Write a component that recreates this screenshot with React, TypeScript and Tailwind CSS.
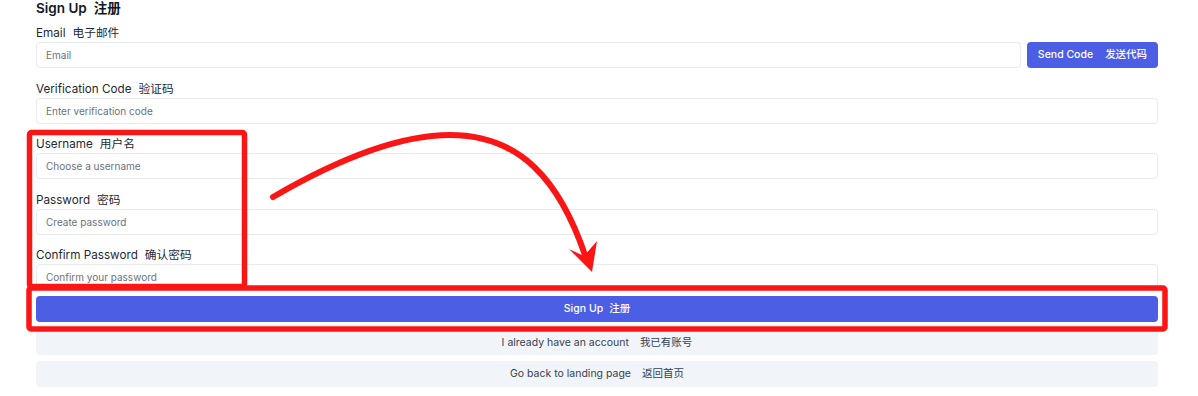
import type { ReactNode } from 'react';

const font = { fontFamily: 'Inter, "Noto Sans CJK SC", sans-serif' };

function Field({
  label,
  zh,
  placeholder,
  children,
}: {
  label: string;
  zh: string;
  placeholder: string;
  children?: ReactNode;
}) {
  return (
    <div className="flex flex-col">
      <label className="mb-px h-4 text-[11.7px] leading-4 text-[#1f2937]">
        {label}
        <span className="ml-[7px]">{zh}</span>
      </label>
      <div className="flex gap-[6px]">
        <input
          placeholder={placeholder}
          className="h-[26px] min-w-0 flex-1 rounded-[4px] border border-[#e8eaf1] bg-white px-[9px] text-[10px] text-[#1f2937] outline-none placeholder:text-[#6b7280]"
        />
        {children}
      </div>
    </div>
  );
}

function Annotations() {
  return (
    <svg
      className="pointer-events-none absolute inset-0"
      width="1198"
      height="396"
      viewBox="0 0 1198 396"
    >
      <g fill="none" stroke="#fb1616" strokeWidth="5.5" strokeLinejoin="round">
        <rect x="29.5" y="132.5" width="215" height="154" rx="2" />
        <rect x="29" y="288" width="1136" height="41" rx="2" />
      </g>
      <path
        d="M273 197 C 340 158, 400 135, 450 135 C 520 135, 560 180, 586 258"
        fill="none"
        stroke="#fb1616"
        strokeWidth="6"
        strokeLinecap="round"
      />
      <path d="M569 249 L584 256 L597 241 L592 272 Z" fill="#fb1616" />
    </svg>
  );
}

export default function App() {
  return (
    <div className="relative h-[396px] w-full bg-white" style={font}>
      <div className="flex flex-col pl-9 pr-10">
        <h1 className="h-4 text-[13.5px] font-semibold leading-4 text-[#111827]">
          Sign Up<span className="ml-[7px]">注册</span>
        </h1>
        <div className="mt-[9px] flex flex-col gap-[12.5px]">
          <Field label="Email" zh="电子邮件" placeholder="Email">
            <button className="flex h-[26px] w-[131px] items-center justify-center gap-[12px] rounded-[4px] bg-[#4b5ee4] text-[10.5px] font-medium text-white">
              <span>Send Code</span>
              <span>发送代码</span>
            </button>
          </Field>
          <Field label="Verification Code" zh="验证码" placeholder="Enter verification code" />
          <Field label="Username" zh="用户名" placeholder="Choose a username" />
          <Field label="Password" zh="密码" placeholder="Create password" />
          <Field label="Confirm Password" zh="确认密码" placeholder="Confirm your password" />
        </div>
        <button className="mt-[6px] flex h-[26px] items-center justify-center rounded-[4px] bg-[#4b5ee4] text-[10.5px] font-medium text-white">
          Sign Up<span className="ml-[6px]">注册</span>
        </button>
        <button className="mt-[8px] flex h-[25px] items-center justify-center gap-[11px] rounded-[4px] bg-[#f1f4f9] text-[10.5px] text-[#374151]">
          <span>I already have an account</span>
          <span>我已有账号</span>
        </button>
        <button className="mt-[6px] flex h-[26px] items-center justify-center gap-[11px] rounded-[4px] bg-[#f1f4f9] text-[10.5px] text-[#374151]">
          <span>Go back to landing page</span>
          <span>返回首页</span>
        </button>
      </div>
      <Annotations />
    </div>
  );
}
